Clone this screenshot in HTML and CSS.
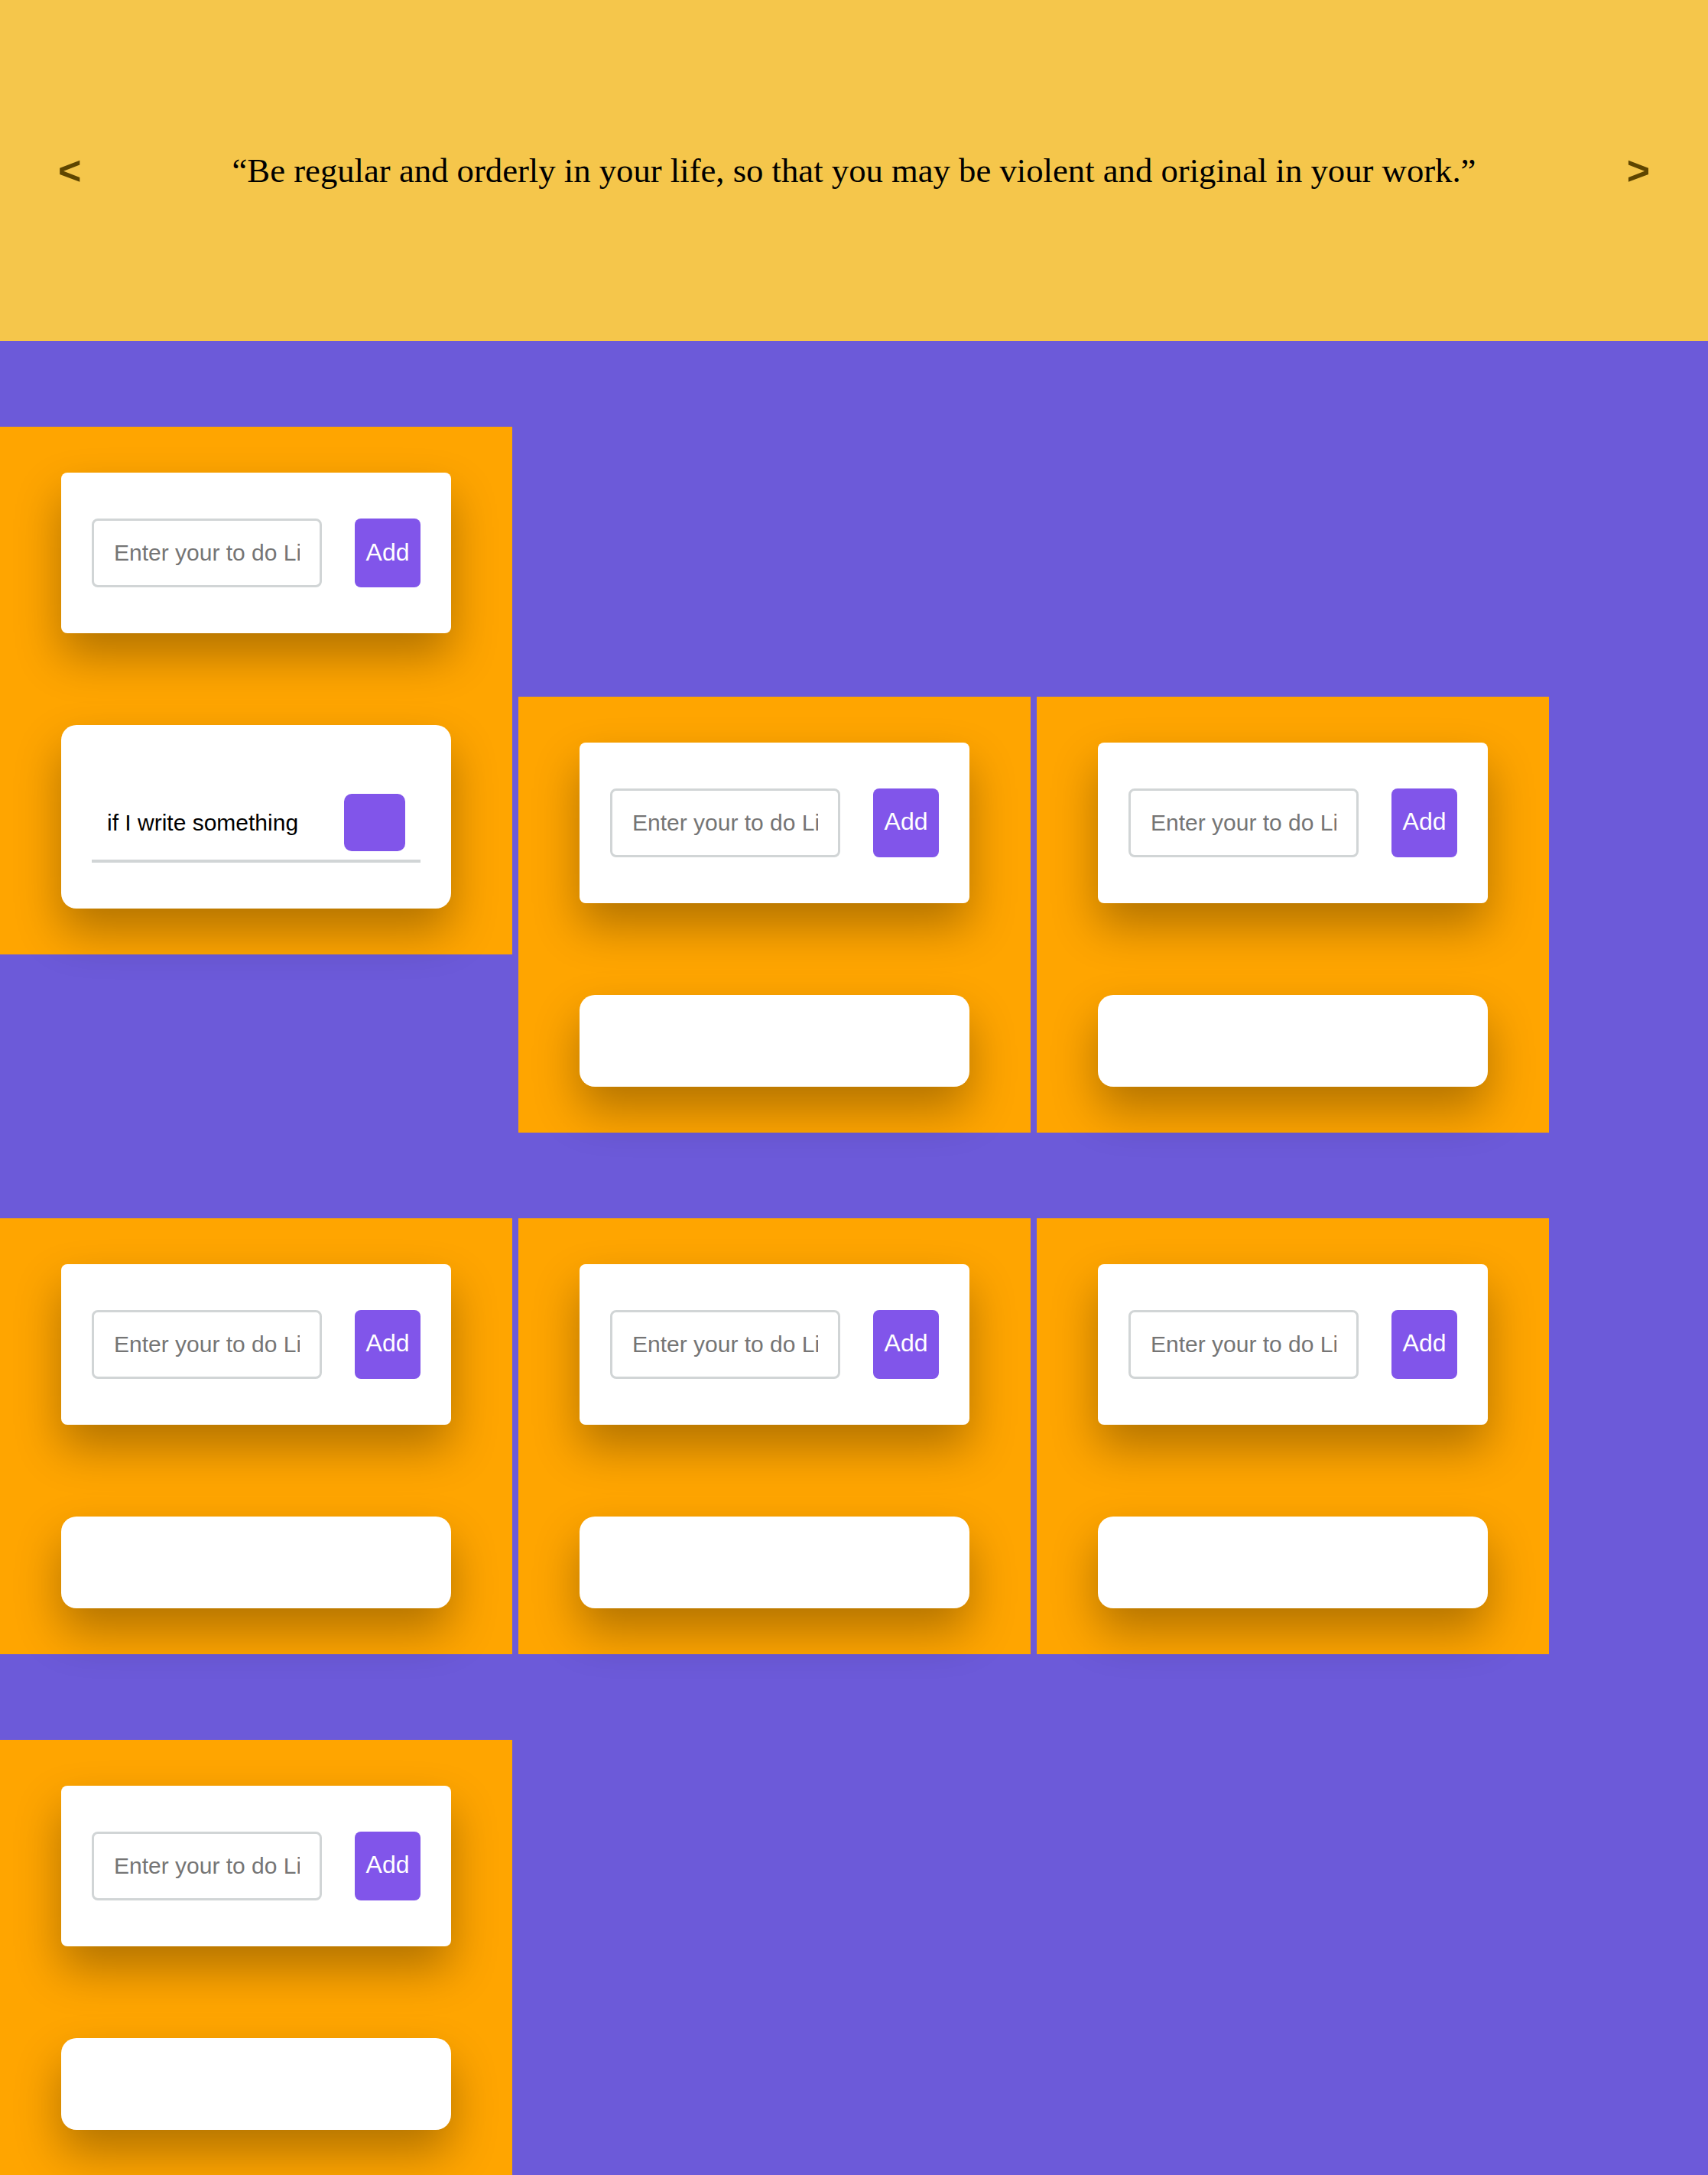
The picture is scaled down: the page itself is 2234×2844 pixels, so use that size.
FILE: index.html
```html
<!DOCTYPE html>
<html lang="en">
<head>
<meta charset="utf-8">
<title>To do boards</title>
<link rel="stylesheet" href="styles.css">
</head>
<body>
<header class="quote-bar">
  <button class="nav-arrow" type="button">&lt;</button>
  <blockquote class="quote">“Be regular and orderly in your life, so that you may be violent and original in your work.”</blockquote>
  <button class="nav-arrow" type="button">&gt;</button>
</header>
<main class="boards"><section class="board">
    <form class="todo-form"><input class="todo-input" type="text" placeholder="Enter your to do List"><button class="add-btn" type="button">Add</button></form>
    <ul class="todo-list"><li class="todo-item"><span class="todo-text">if I write something</span><button class="del-btn" type="button"></button></li></ul>
  </section><section class="board">
    <form class="todo-form"><input class="todo-input" type="text" placeholder="Enter your to do List"><button class="add-btn" type="button">Add</button></form>
    <ul class="todo-list"></ul>
  </section><section class="board">
    <form class="todo-form"><input class="todo-input" type="text" placeholder="Enter your to do List"><button class="add-btn" type="button">Add</button></form>
    <ul class="todo-list"></ul>
  </section><section class="board">
    <form class="todo-form"><input class="todo-input" type="text" placeholder="Enter your to do List"><button class="add-btn" type="button">Add</button></form>
    <ul class="todo-list"></ul>
  </section><section class="board">
    <form class="todo-form"><input class="todo-input" type="text" placeholder="Enter your to do List"><button class="add-btn" type="button">Add</button></form>
    <ul class="todo-list"></ul>
  </section><section class="board">
    <form class="todo-form"><input class="todo-input" type="text" placeholder="Enter your to do List"><button class="add-btn" type="button">Add</button></form>
    <ul class="todo-list"></ul>
  </section><section class="board">
    <form class="todo-form"><input class="todo-input" type="text" placeholder="Enter your to do List"><button class="add-btn" type="button">Add</button></form>
    <ul class="todo-list"></ul>
  </section></main>
</body>
</html>
```
FILE: styles.css
```css
* {
  box-sizing: border-box;
}

html, body {
  margin: 0;
  padding: 0;
}

body {
  background: #6c5ad9;
  font-family: "Liberation Sans", Arial, sans-serif;
}

.quote-bar {
  height: 446px;
  background: #f5c64b;
  display: flex;
  align-items: center;
  justify-content: space-between;
  padding: 0 76px;
}

.nav-arrow {
  background: none;
  border: none;
  padding: 0;
  font-family: "Liberation Sans", Arial, sans-serif;
  font-weight: bold;
  font-size: 52px;
  color: #5e4500;
  line-height: 1;
  cursor: pointer;
}

.quote {
  margin: 0;
  font-family: "Liberation Serif", "Times New Roman", serif;
  font-size: 44.7px;
  color: #000;
  text-align: center;
}

.boards {
  font-size: 0;
}

.board {
  display: inline-block;
  vertical-align: baseline;
  width: 670px;
  margin: 112px 8px 0 0;
  padding: 60px 80px;
  background: #ffa500;
  font-size: 16px;
}

.todo-form {
  display: flex;
  justify-content: space-between;
  align-items: center;
  background: #fff;
  border-radius: 8px;
  padding: 60px 40px;
  box-shadow: 0 30px 60px rgba(0, 0, 0, 0.3);
  margin: 0 0 120px;
}

.todo-input {
  width: 70%;
  height: 90px;
  border: 3px solid #d1d5d6;
  border-radius: 8px;
  padding: 0 26px;
  font-family: "Liberation Sans", Arial, sans-serif;
  font-size: 30px;
  color: #333;
  outline: none;
}

.todo-input::placeholder {
  color: #757575;
}

.add-btn {
  width: 20%;
  height: 90px;
  border: none;
  border-radius: 8px;
  background: #8155ea;
  color: #fff;
  font-family: "Liberation Sans", Arial, sans-serif;
  font-size: 32px;
  padding: 0 0 2px;
}

.todo-list {
  list-style: none;
  margin: 0;
  padding: 60px 40px;
  background: #fff;
  border-radius: 20px;
  box-shadow: 0 30px 60px rgba(0, 0, 0, 0.3);
}

.todo-item {
  display: flex;
  justify-content: space-between;
  align-items: center;
  padding: 30px 20px 11px;
  border-bottom: 4px solid #d1d5d6;
}

.todo-text {
  font-size: 30px;
  color: #000;
}

.del-btn {
  width: 80px;
  height: 75px;
  border: none;
  border-radius: 10px;
  background: #8155ea;
  padding: 0;
}
```
